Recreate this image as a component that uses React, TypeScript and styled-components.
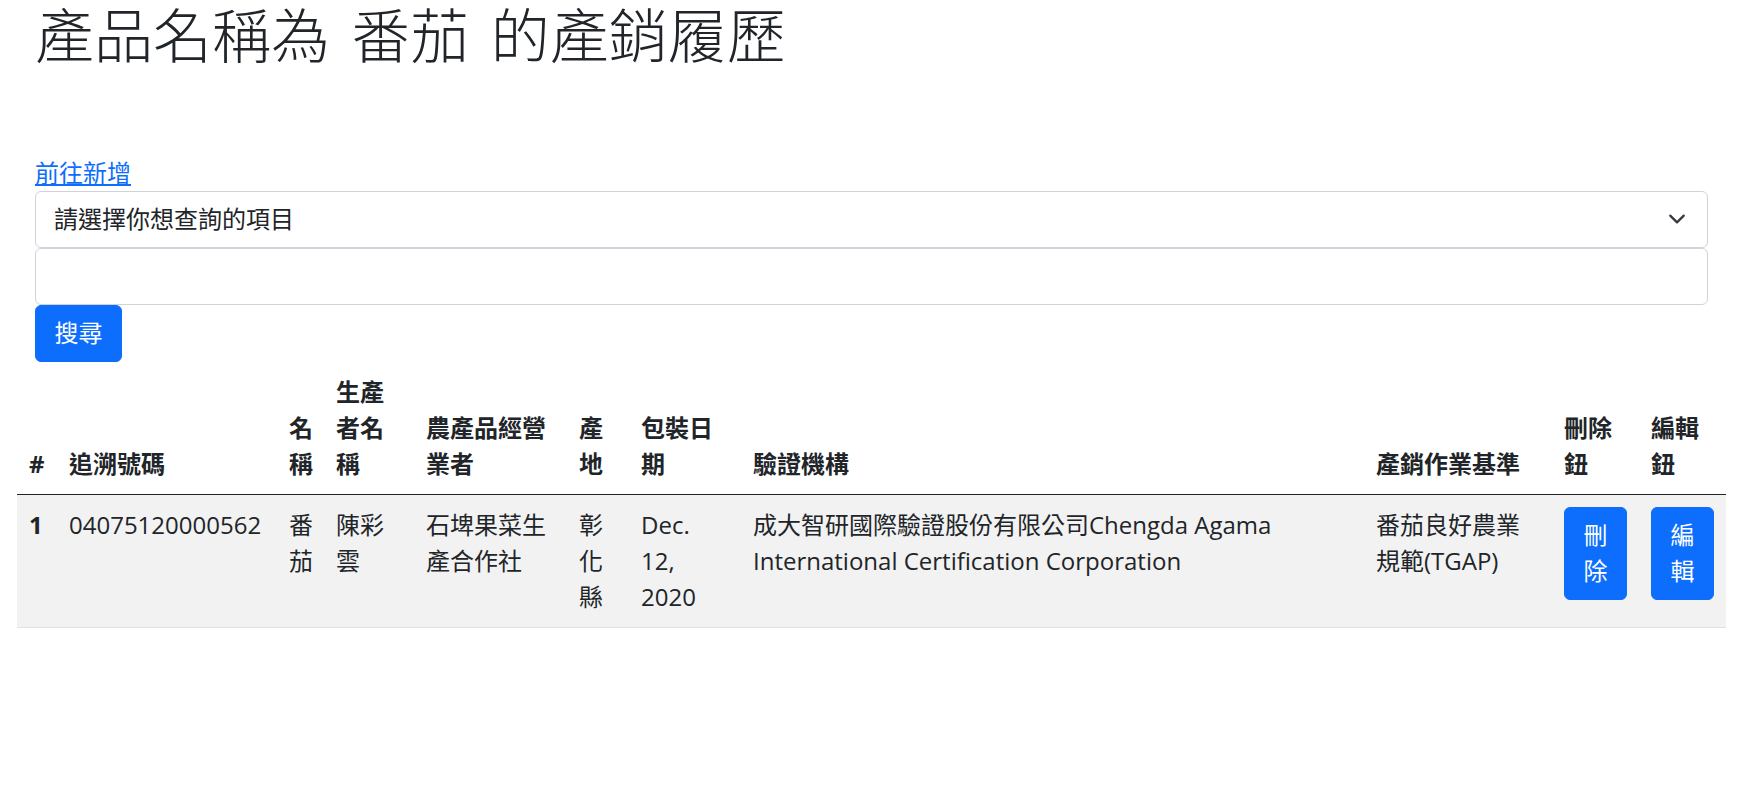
import React from "react";
import styled, { createGlobalStyle } from "styled-components";

const GlobalStyle = createGlobalStyle`
  html, body {
    margin: 0;
    padding: 0;
    background: #ffffff;
  }
  body {
    font-family: "Open Sans", "Noto Sans CJK TC", sans-serif;
    font-size: 24px;
    line-height: 1.5;
    color: #212529;
  }
  *, *::before, *::after { box-sizing: border-box; }
`;

const Page = styled.main`
  padding: 0 17px;
`;

const TopSection = styled.section`
  padding: 0 18px;
  display: flex;
  flex-direction: column;
`;

const Title = styled.h1`
  margin: 0 0 84px;
  font-size: 59px;
  line-height: 1.2;
  font-weight: 300;
  word-spacing: 6px;
  color: #212529;
`;

const AddLink = styled.a`
  align-self: flex-start;
  color: #0d6efd;
  text-decoration: underline;
  font-size: 24px;
  line-height: 36px;
`;

const SelectWrap = styled.div`
  position: relative;
`;

const Select = styled.select`
  appearance: none;
  -webkit-appearance: none;
  display: block;
  width: 100%;
  height: 57px;
  padding: 9px 54px 9px 18px;
  font: inherit;
  color: #212529;
  background: #ffffff;
  border: 1px solid #ced4da;
  border-radius: 6px;
`;

const Chevron = styled.svg`
  position: absolute;
  right: 22px;
  top: 50%;
  transform: translateY(-50%);
  width: 18px;
  height: 18px;
  pointer-events: none;
`;

const TextInput = styled.input`
  display: block;
  width: 100%;
  height: 57px;
  padding: 9px 18px;
  font: inherit;
  color: #212529;
  background: #ffffff;
  border: 1px solid #ced4da;
  border-radius: 6px;
`;

const PrimaryButton = styled.button`
  display: inline-block;
  align-self: flex-start;
  font: inherit;
  font-size: 24px;
  line-height: 36px;
  color: #ffffff;
  background: #0d6efd;
  border: 1px solid #0d6efd;
  border-radius: 6px;
  padding: 9.5px 18.5px;
  cursor: pointer;
  text-align: center;
`;

const Table = styled.table`
  width: 100%;
  border-collapse: collapse;
  table-layout: fixed;
  color: #212529;
`;

const Col = styled.col<{ $w?: number }>`
  width: ${(p) => (p.$w ? `${p.$w}px` : "auto")};
`;

const HeadCell = styled.th`
  padding: 12px;
  vertical-align: bottom;
  text-align: left;
  font-weight: 700;
  border-bottom: 1px solid #212529;
`;

const BodyRow = styled.tr`
  background: #f2f2f2;
`;

const BodyCell = styled.td<{ $bold?: boolean }>`
  padding: 12px;
  vertical-align: top;
  font-weight: ${(p) => (p.$bold ? 700 : 400)};
  border-bottom: 1px solid #dee2e6;
`;

const columns: { label: string; w?: number }[] = [
  { label: "#", w: 40 },
  { label: "追溯號碼", w: 220 },
  { label: "名稱", w: 47 },
  { label: "生產者名稱", w: 90 },
  { label: "農產品經營業者", w: 153 },
  { label: "產地", w: 62 },
  { label: "包裝日期", w: 112 },
  { label: "驗證機構" },
  { label: "產銷作業基準", w: 188 },
  { label: "刪除鈕", w: 87 },
  { label: "編輯鈕", w: 87 },
];

const record = {
  id: "1",
  code: "04075120000562",
  name: "番茄",
  producer: "陳彩雲",
  operator: "石埤果菜生產合作社",
  origin: "彰化縣",
  date: "Dec. 12, 2020",
  cert: "成大智研國際驗證股份有限公司Chengda Agama International Certification Corporation",
  standard: "番茄良好農業規範(TGAP)",
};

export default function App() {
  return (
    <>
      <GlobalStyle />
      <Page>
        <TopSection>
          <Title>產品名稱為 番茄 的產銷履歷</Title>
          <AddLink href="#">前往新增</AddLink>
          <SelectWrap>
            <Select defaultValue="">
              <option value="">請選擇你想查詢的項目</option>
            </Select>
            <Chevron viewBox="0 0 16 16" fill="none">
              <path
                d="M2 5l6 6 6-6"
                stroke="#343a40"
                strokeWidth="2"
                strokeLinecap="round"
                strokeLinejoin="round"
              />
            </Chevron>
          </SelectWrap>
          <TextInput type="text" />
          <PrimaryButton>搜尋</PrimaryButton>
        </TopSection>
        <Table>
          <colgroup>
            {columns.map((c, i) => (
              <Col key={i} $w={c.w} />
            ))}
          </colgroup>
          <thead>
            <tr>
              {columns.map((c, i) => (
                <HeadCell key={i}>{c.label}</HeadCell>
              ))}
            </tr>
          </thead>
          <tbody>
            <BodyRow>
              <BodyCell $bold>{record.id}</BodyCell>
              <BodyCell>{record.code}</BodyCell>
              <BodyCell>{record.name}</BodyCell>
              <BodyCell>{record.producer}</BodyCell>
              <BodyCell>{record.operator}</BodyCell>
              <BodyCell>{record.origin}</BodyCell>
              <BodyCell>{record.date}</BodyCell>
              <BodyCell>{record.cert}</BodyCell>
              <BodyCell>{record.standard}</BodyCell>
              <BodyCell>
                <PrimaryButton>刪除</PrimaryButton>
              </BodyCell>
              <BodyCell>
                <PrimaryButton>編輯</PrimaryButton>
              </BodyCell>
            </BodyRow>
          </tbody>
        </Table>
      </Page>
    </>
  );
}
